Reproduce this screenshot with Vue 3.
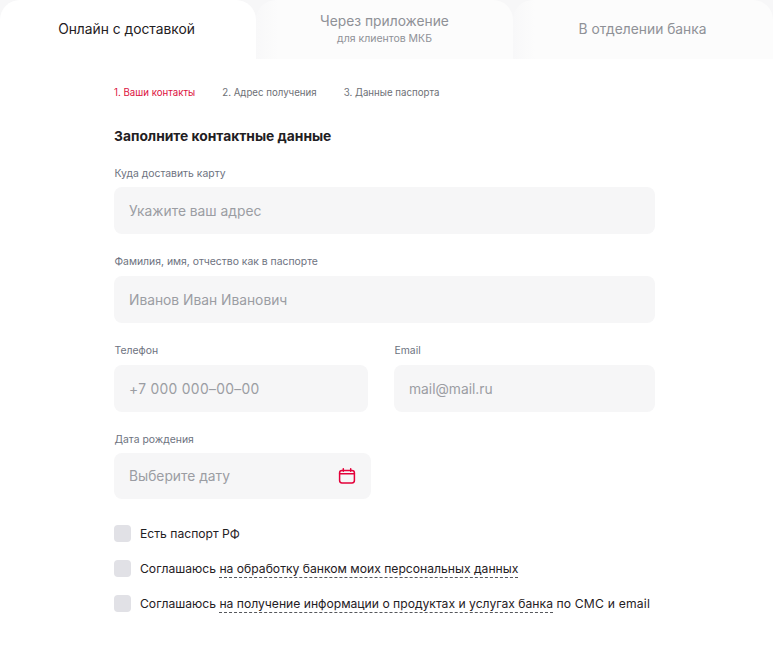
<script setup>
const steps = [
  { text: '1. Ваши контакты', active: true },
  { text: '2. Адрес получения' },
  { text: '3. Данные паспорта' },
]
</script>

<template>
  <div class="page">
    <div class="tabs">
      <div class="tab tab-active">Онлайн с доставкой</div>
      <div class="tab tab-mid">
        <span>Через приложение</span>
        <small>для клиентов МКБ</small>
      </div>
      <div class="tab tab-last">В отделении банка</div>
    </div>
    <div class="form">
      <div class="steps">
        <span v-for="s in steps" :key="s.text" :class="{ on: s.active }">{{ s.text }}</span>
      </div>
      <h2>Заполните контактные данные</h2>
      <div class="field first">
        <label>Куда доставить карту</label>
        <div class="input">Укажите ваш адрес</div>
      </div>
      <div class="field">
        <label>Фамилия, имя, отчество как в паспорте</label>
        <div class="input">Иванов Иван Иванович</div>
      </div>
      <div class="row">
        <div class="field phone">
          <label>Телефон</label>
          <div class="input">+7 000 000–00–00</div>
        </div>
        <div class="field email">
          <label>Email</label>
          <div class="input">mail@mail.ru</div>
        </div>
      </div>
      <div class="field date">
        <label>Дата рождения</label>
        <div class="input date-input">
          Выберите дату
          <svg width="18" height="16" viewBox="0 0 18 16" fill="none" stroke="#e4003a" stroke-width="1.5" stroke-linecap="round">
            <rect x="1.6" y="2.4" width="14.8" height="12.6" rx="2.4" />
            <path d="M1.6 5.8H16.4M5.3 .8V3.2M12.7 .8V3.2" />
          </svg>
        </div>
      </div>
      <div class="checks">
        <div class="check"><i></i><span>Есть паспорт РФ</span></div>
        <div class="check"><i></i><span>Соглашаюсь <u>на обработку банком моих персональных данных</u></span></div>
        <div class="check"><i></i><span>Соглашаюсь <u>на получение информации о продуктах и услугах банка</u> <span class="tail">по СМС и email</span></span></div>
      </div>
    </div>
  </div>
</template>

<style scoped>
.page {
  width: 773px;
  height: 648px;
  background: #fff;
  font-family: Inter, Roboto, sans-serif;
  overflow: hidden;
}
.tabs {
  display: flex;
  height: 59px;
  background: linear-gradient(#f7f7f8, #f7f7f8 20px, #fafafa 20px);
}
.tab {
  background: linear-gradient(90deg, #f8f8f9, #fcfcfc 22px);
  border-radius: 20px 20px 0 0;
  display: flex;
  flex-direction: column;
  align-items: center;
  justify-content: center;
  padding-bottom: 2px;
  box-sizing: border-box;
  color: #8f9197;
  font-size: 13.8px;
}
.tab-active {
  width: 256px;
  background: #fff;
  color: #1f2023;
  padding-right: 3px;
}
.tab-mid {
  width: 257px;
}
.tab-last {
  width: 260px;
  padding-right: 1px;
}
.tab small {
  font-size: 10.5px;
  margin-top: 3px;
}
.form {
  padding: 27px 0 0 114px;
}
.steps {
  display: flex;
  gap: 27px;
  font-size: 9.7px;
  line-height: 13px;
  color: #6d7076;
}
.steps .on {
  color: #dc1040;
}
h2 {
  margin: 28px 0 0;
  font-size: 13.8px;
  line-height: 18px;
  font-weight: 700;
  color: #1f2023;
}
.field {
  width: 541px;
  margin-top: 21px;
}
.field.first {
  margin-top: 22px;
}
.field.first label,
.date label {
  margin-bottom: 6px;
}
label {
  display: block;
  font-size: 10.4px;
  line-height: 14px;
  color: #6d7280;
  margin-bottom: 7px;
  padding-left: 0.5px;
}
.input {
  height: 47px;
  border-radius: 8px;
  background: #f6f6f7;
  display: flex;
  align-items: center;
  padding: 0 15px;
  font-size: 13.8px;
  color: #9b9da3;
}
.phone .input {
  letter-spacing: 0.33px;
}
.row {
  display: flex;
  gap: 26px;
  width: 541px;
}
.phone {
  width: 254px;
}
.email {
  width: 261px;
}
.date {
  width: 257px;
}
.date-input {
  height: 46px;
  justify-content: space-between;
  padding-right: 15px;
}
.checks {
  margin-top: 25px;
  display: flex;
  flex-direction: column;
  gap: 17px;
}
.check {
  display: flex;
  align-items: center;
  gap: 9px;
  height: 18px;
  font-size: 12.15px;
  color: #1f2023;
}
.check i {
  width: 17px;
  height: 17px;
  border-radius: 4px;
  background: #e1e1e6;
  flex: none;
}
.check u {
  text-decoration: none;
  border-bottom: 1px dashed #55575c;
  padding-bottom: 1px;
}
.tail {
  letter-spacing: 0.2px;
}
</style>
